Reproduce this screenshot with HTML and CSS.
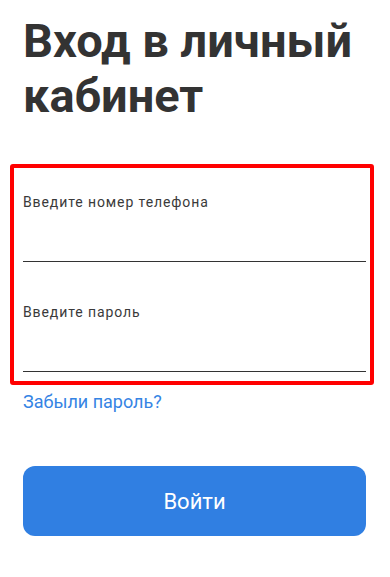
FILE: index.html
```html
<!DOCTYPE html>
<html lang="ru">
<head>
<meta charset="utf-8">
<meta name="viewport" content="width=device-width, initial-scale=1">
<title>Вход в личный кабинет</title>
<link rel="stylesheet" href="styles.css">
</head>
<body>
<main class="page">
  <h1 class="title">Вход в личный кабинет</h1>
  <form class="form">
    <div class="fields">
      <label class="field">
        <span class="field-label">Введите номер телефона</span>
        <input class="field-input" type="tel">
      </label>
      <label class="field">
        <span class="field-label">Введите пароль</span>
        <input class="field-input" type="password">
      </label>
    </div>
    <a class="forgot" href="#">Забыли пароль?</a>
    <button class="submit" type="button">Войти</button>
  </form>
</main>
</body>
</html>
```
FILE: styles.css
```css
* { box-sizing: border-box; }
html, body { margin: 0; padding: 0; background: #fff; }
body {
  font-family: Roboto, "Noto Sans", "Liberation Sans", sans-serif;
  color: #333;
}
.page {
  padding: 0 24px 0 23px;
}
.title {
  margin: 13px 0 0;
  font-size: 47px;
  line-height: 55px;
  font-weight: 700;
  color: #333;
}
.form {
  display: flex;
  flex-direction: column;
}
.fields {
  margin: 41px -8px 0 -13px;
  padding: 26px 4px 9px 9px;
  border: 4px solid #ff0000;
  border-radius: 3px;
  display: flex;
  flex-direction: column;
  gap: 42px;
}
.field {
  display: flex;
  flex-direction: column;
}
.field-label {
  font-size: 14px;
  line-height: 16px;
  letter-spacing: 0.9px;
  color: #3a3a3a;
}
.field-input {
  height: 52px;
  border: 0;
  border-bottom: 1px solid #333;
  outline: none;
  background: transparent;
  padding: 0;
  font: inherit;
}
.forgot {
  margin-top: 6px;
  font-size: 18px;
  line-height: 21px;
  color: #3584e4;
  text-decoration: none;
  align-self: flex-start;
}
.submit {
  margin-top: 54px;
  height: 70px;
  border: 0;
  border-radius: 12px;
  background: #307fe2;
  color: #fff;
  font-family: Roboto, "Noto Sans", "Liberation Sans", sans-serif;
  font-size: 22px;
  cursor: pointer;
}
```
